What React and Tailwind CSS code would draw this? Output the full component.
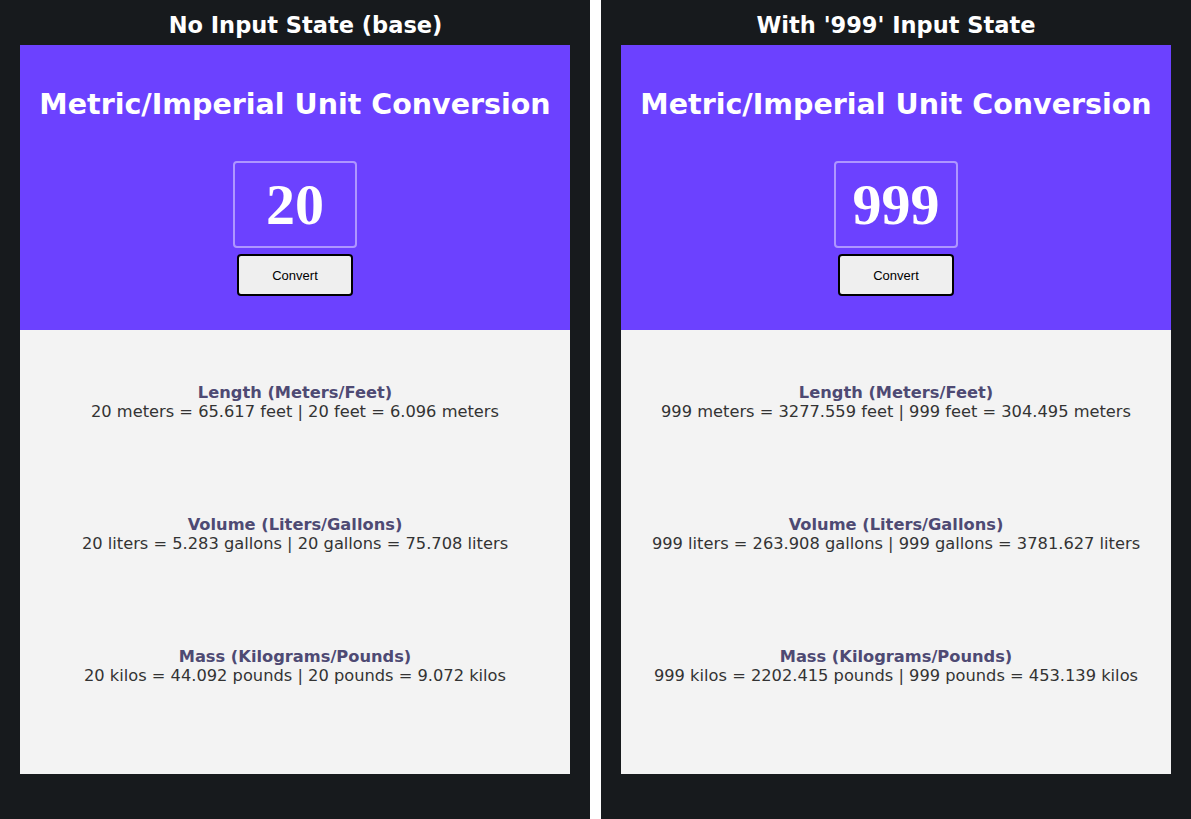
const convert = (n) => ({
  length: `${n} meters = ${(n * 3.28084).toFixed(3)} feet | ${n} feet = ${(n / 3.28084).toFixed(3)} meters`,
  volume: `${n} liters = ${(n * 0.264172).toFixed(3)} gallons | ${n} gallons = ${(n / 0.264172).toFixed(3)} liters`,
  mass: `${n} kilos = ${(n * 2.20462).toFixed(3)} pounds | ${n} pounds = ${(n / 2.20462).toFixed(3)} kilos`,
});

const Section = ({ title, text }) => (
  <div className="text-center text-[16.25px] leading-[19px]">
    <div className="font-bold text-[#4e4a73]">{title}</div>
    <div className="text-[#333333]">{text}</div>
  </div>
);

const Panel = ({ label, value, shift }) => {
  const r = convert(value);
  return (
    <div className="w-[590px] h-[819px] bg-[#171a1d] flex flex-col">
      <div
        className={`h-[45px] pt-[7px] flex items-center justify-center text-white font-bold text-[22.5px] ${
          shift ? "pl-[21px]" : ""
        }`}
      >
        {label}
      </div>
      <div className="mx-[20px] w-[550px]">
        {/* header */}
        <div className="h-[285px] bg-[#6c41ff] flex flex-col items-center pt-[43px]">
          <h1 className="text-white font-bold text-[28.5px] leading-[34px]">
            Metric/Imperial Unit Conversion
          </h1>
          <div className="mt-[39px] w-[124px] h-[87px] rounded-[4px] border-2 border-white/45 flex items-center justify-center text-white font-bold text-[58px] font-['Liberation_Serif',serif]">
            {value}
          </div>
          <button className="mt-[6px] w-[116px] h-[42px] pt-[1px] rounded-[4px] border-2 border-black bg-[#efefef] text-black text-[13px] font-['Liberation_Sans',Arial,sans-serif]">
            Convert
          </button>
        </div>
        {/* results */}
        <div className="h-[444px] bg-[#f3f3f3] flex flex-col pt-[53px] gap-[94px]">
          <Section title="Length (Meters/Feet)" text={r.length} />
          <Section title="Volume (Liters/Gallons)" text={r.volume} />
          <Section title="Mass (Kilograms/Pounds)" text={r.mass} />
        </div>
      </div>
    </div>
  );
};

export default function App() {
  return (
    <div className="flex w-[1191px] h-[819px] font-['DejaVu_Sans',Verdana,sans-serif]">
      <Panel label="No Input State (base)" value={20} shift />
      <div className="w-[11px] bg-white" />
      <Panel label="With '999' Input State" value={999} />
    </div>
  );
}
